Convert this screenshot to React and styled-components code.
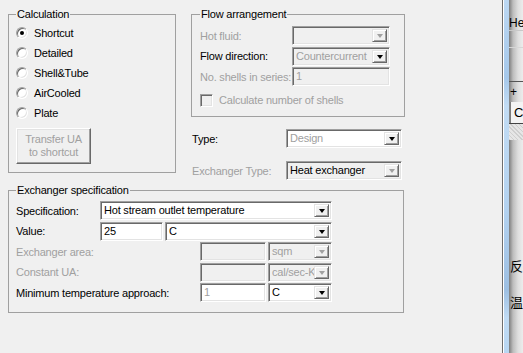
import React from 'react'
import styled, { createGlobalStyle } from 'styled-components'

const GlobalStyle = createGlobalStyle`
    html, body {
        margin: 0;
        padding: 0;
        background: #f0f0f0;
    }
    body {
        font-family: "Liberation Sans", Arial, sans-serif;
        font-size: 11px;
        letter-spacing: -0.2px;
        color: #000;
    }
`

const Window = styled.div`
    display: flex;
    width: 523px;
    height: 353px;
    overflow: hidden;
    background: #f0f0f0;
`

const Main = styled.div`
    width: 502px;
    flex: none;
    box-sizing: border-box;
    padding: 8px 0 0 8px;
    display: flex;
    flex-direction: column;
    gap: 4px;
`

const TopRow = styled.div`
    display: flex;
    align-items: flex-start;
    gap: 15px;
`

const RightColumn = styled.div`
    display: flex;
    flex-direction: column;
`

const Group = styled.fieldset`
    margin: 0;
    min-width: 0;
    box-sizing: border-box;
    width: ${p => p.$w}px;
    height: ${p => p.$h}px;
    border: 1px solid #a0a0a0;
    padding: ${p => p.$pt}px 0 0 ${p => p.$pl}px;
    display: flex;
    flex-direction: column;
`

const Caption = styled.legend`
    padding: 0 1px;
    line-height: 13px;
    font-size: 11px;
`

const RadioRow = styled.div`
    display: flex;
    align-items: center;
    gap: 6px;
    height: 20px;
`

const RadioCircle = styled.span`
    width: 12px;
    height: 12px;
    box-sizing: border-box;
    border-radius: 50%;
    background: #fff;
    border: 1px solid;
    border-color: #a0a0a0 #fff #fff #a0a0a0;
    box-shadow: inset 1px 1px #696969, inset -1px -1px #e3e3e3;
    display: flex;
    align-items: center;
    justify-content: center;
    &::after {
        content: '';
        width: 4px;
        height: 4px;
        border-radius: 50%;
        background: ${p => (p.$checked ? '#000' : 'transparent')};
    }
`

const PushButton = styled.div`
    width: 75px;
    height: 36px;
    margin-top: 5px;
    box-sizing: border-box;
    border: 1px solid;
    border-color: #fff #696969 #696969 #fff;
    box-shadow: inset -1px -1px #a0a0a0, inset 1px 1px #e3e3e3;
    color: #a0a0a0;
    text-align: center;
    line-height: 13px;
    display: flex;
    align-items: center;
    justify-content: center;
`

const Rows = styled.div`
    display: flex;
    flex-direction: column;
    gap: 1.5px;
`

const Row = styled.div`
    display: flex;
    align-items: center;
    height: 19px;
`

const Label = styled.span`
    width: ${p => p.$w}px;
    flex: none;
    padding-left: ${p => p.$pl || 0}px;
    box-sizing: border-box;
    white-space: nowrap;
    color: ${p => (p.$muted ? '#a0a0a0' : '#000')};
`

const Sunken = styled.div`
    width: ${p => p.$w}px;
    height: 19px;
    flex: none;
    box-sizing: border-box;
    margin-left: ${p => p.$ml || 0}px;
    border: 1px solid;
    border-color: #a0a0a0 #fff #fff #a0a0a0;
    box-shadow: inset 1px 1px #696969, inset -1px -1px #e3e3e3;
    background: ${p => (p.$white ? '#fff' : '#f0f0f0')};
    color: ${p => (p.$muted ? '#a0a0a0' : '#000')};
    padding: 2px;
    display: flex;
    align-items: center;
    line-height: 13px;
`

const FieldText = styled.span`
    flex: 1;
    padding-left: 1px;
    overflow: hidden;
    white-space: nowrap;
`

const DropButton = styled.span`
    width: 15px;
    align-self: stretch;
    flex: none;
    box-sizing: border-box;
    background: #f0f0f0;
    border: 1px solid;
    border-color: #e3e3e3 #696969 #696969 #e3e3e3;
    box-shadow: inset 1px 1px #fff, inset -1px -1px #a0a0a0;
    display: flex;
    align-items: center;
    justify-content: center;
    &::after {
        content: '';
        border-left: 3.5px solid transparent;
        border-right: 3.5px solid transparent;
        border-top: 4px solid ${p => (p.$disabled ? '#a0a0a0' : '#000')};
        margin-top: 1px;
    }
`

const CheckRow = styled.div`
    display: flex;
    align-items: center;
    gap: 6px;
    height: 16px;
    margin-top: 6px;
    color: #a0a0a0;
`

const CheckBox = styled.span`
    width: 13px;
    height: 13px;
    box-sizing: border-box;
    background: #f0f0f0;
    border: 1px solid;
    border-color: #a0a0a0 #fff #fff #a0a0a0;
    box-shadow: inset 1px 1px #696969, inset -1px -1px #e3e3e3;
`

const TypeRows = styled.div`
    display: flex;
    flex-direction: column;
    gap: 13px;
    margin-top: 12px;
`

const Splitter = styled.div`
    width: 7px;
    flex: none;
    box-sizing: border-box;
    border-left: 1px solid #6e6e6e;
    background:
        linear-gradient(to right, #fff 0 1px, transparent 1px),
        linear-gradient(to bottom, #bcd8f3 0, #a6c8ea 22%, #c2dcf4 30%, #b3d2f0 60%, #9dbfe2 82%, #c0dbf4 90%, #b8d6f2 100%);
`

const SidePanel = styled.div`
    flex: 1;
    overflow: hidden;
    display: flex;
    flex-direction: column;
    background: linear-gradient(to right, #7d7d7d, #bdbdbd 4px, #dedede 9px, #ececec);
    font-family: "Liberation Sans", "Noto Sans CJK SC", sans-serif;
    letter-spacing: 0;
`

const SideRow = styled.div`
    height: ${p => p.$h}px;
    flex: none;
    box-sizing: border-box;
    padding-left: ${p => p.$pl || 0}px;
    border-bottom: ${p => (p.$line ? `1px solid ${p.$line}` : 'none')};
    display: flex;
    align-items: center;
    white-space: nowrap;
    font-size: ${p => p.$fs || 11}px;
`

const SideCell = styled.div`
    margin-left: 1px;
    padding-left: 3px;
    height: 100%;
    display: flex;
    align-items: center;
    border-left: 1px solid #7d7d7d;
    background: #f4f4f4;
    font-size: 13px;
`

const Hatch = styled.div`
    height: 16px;
    flex: none;
    background: repeating-linear-gradient(45deg, #cfcfcf 0 1px, #e6e6e6 1px 3px);
`

function Combo({ w, ml, value, white, muted, disabled }) {
    return (
        <Sunken $w={w} $ml={ml} $white={white} $muted={muted}>
            <FieldText>{value}</FieldText>
            <DropButton $disabled={disabled} />
        </Sunken>
    )
}

function TextBox({ w, value, white, muted }) {
    return (
        <Sunken $w={w} $white={white} $muted={muted}>
            <FieldText>{value}</FieldText>
        </Sunken>
    )
}

const methods = ['Shortcut', 'Detailed', 'Shell&Tube', 'AirCooled', 'Plate']

export default function App() {
    return (
        <Window>
            <GlobalStyle />
            <Main>
                <TopRow>
                    <Group $w={168} $h={165} $pt={2} $pl={7}>
                        <Caption>Calculation</Caption>
                        {methods.map((m, i) => (
                            <RadioRow key={m}>
                                <RadioCircle $checked={i === 0} />
                                {m}
                            </RadioRow>
                        ))}
                        <PushButton>Transfer UA<br />to shortcut</PushButton>
                    </Group>

                    <RightColumn>
                        <Group $w={214} $h={109} $pt={5} $pl={8}>
                            <Caption>Flow arrangement</Caption>
                            <Rows>
                                <Row>
                                    <Label $w={92} $muted>Hot fluid:</Label>
                                    <Combo w={98} value="" muted disabled />
                                </Row>
                                <Row>
                                    <Label $w={92}>Flow direction:</Label>
                                    <Combo w={98} value="Countercurrent" muted />
                                </Row>
                                <Row>
                                    <Label $w={92} $muted>No. shells in series:</Label>
                                    <TextBox w={98} value="1" muted />
                                </Row>
                            </Rows>
                            <CheckRow>
                                <CheckBox />
                                Calculate number of shells
                            </CheckRow>
                        </Group>

                        <TypeRows>
                            <Row>
                                <Label $w={95} $pl={1}>Type:</Label>
                                <Combo w={116} value="Design" white muted />
                            </Row>
                            <Row>
                                <Label $w={95} $pl={1} $muted>Exchanger Type:</Label>
                                <Combo w={116} value="Heat exchanger" disabled />
                            </Row>
                        </TypeRows>
                    </RightColumn>
                </TopRow>

                <Group $w={396} $h={129} $pt={4} $pl={7}>
                    <Caption>Exchanger specification</Caption>
                    <Rows>
                        <Row>
                            <Label $w={84}>Specification:</Label>
                            <Combo w={232} value="Hot stream outlet temperature" white />
                        </Row>
                        <Row>
                            <Label $w={84}>Value:</Label>
                            <TextBox w={63} value="25" white />
                            <Combo w={167} ml={2} value="C" white />
                        </Row>
                        <Row>
                            <Label $w={184} $muted>Exchanger area:</Label>
                            <TextBox w={66} value="" />
                            <Combo w={64} ml={2} value="sqm" muted disabled />
                        </Row>
                        <Row>
                            <Label $w={184} $muted>Constant UA:</Label>
                            <TextBox w={66} value="" />
                            <Combo w={64} ml={2} value="cal/sec-K" muted disabled />
                        </Row>
                        <Row>
                            <Label $w={184}>Minimum temperature approach:</Label>
                            <TextBox w={66} value="1" white muted />
                            <Combo w={64} ml={2} value="C" white />
                        </Row>
                    </Rows>
                </Group>
            </Main>

            <Splitter />

            <SidePanel>
                <SideRow $h={15} />
                <SideRow $h={16} $line="#c8c8c8" $fs={12}>He</SideRow>
                <SideRow $h={17} $line="#d6d6d6" />
                <SideRow $h={34} $line="#555" />
                <SideRow $h={20} $pl={1} $fs={12}>+</SideRow>
                <SideRow $h={22} $line="#444">
                    <SideCell>C</SideCell>
                </SideRow>
                <Hatch />
                <SideRow $h={112} />
                <SideRow $h={26} $pl={1} $fs={13}>反</SideRow>
                <SideRow $h={10} />
                <SideRow $h={26} $pl={1} $fs={13}>温</SideRow>
            </SidePanel>
        </Window>
    )
}
